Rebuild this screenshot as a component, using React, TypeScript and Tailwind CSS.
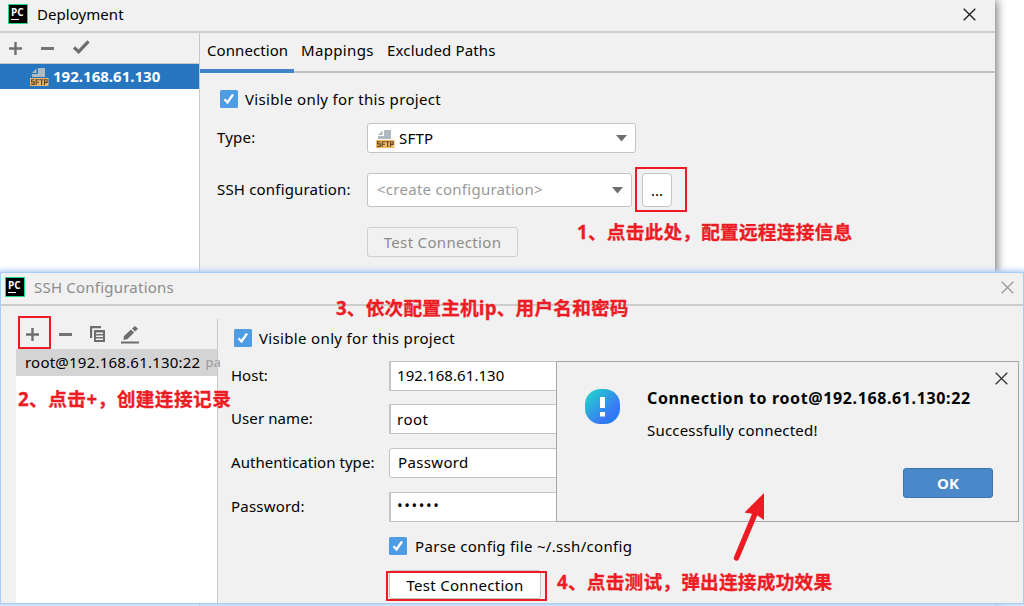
import type { ReactNode } from "react";

const ui = "font-['Noto_Sans','Noto_Sans_CJK_SC',sans-serif]";

function PyCharmIcon() {
  return (
    <div className="flex h-5 w-5 shrink-0 flex-col border border-[#21d789] bg-black pt-[2px] pl-[2px]">
      <span className="h-[10px] font-['Open_Sans',sans-serif] text-[10px] leading-[10px] font-bold text-white">PC</span>
      <span className="mt-[2px] h-px w-2 bg-white" />
    </div>
  );
}

function SftpIcon({ selected = false }: { selected?: boolean }) {
  return (
    <svg width="19" height="19" viewBox="0 0 19 19" className="shrink-0">
      <path d="M8 1h7v9H2V7h6z" fill="#aeb9c0" />
      <path d="M6.500 1.500v4.500H2z" fill="#aeb9c0" />
      <rect x="0" y="11" width="18.500" height="8" fill={selected ? "#e9b66e" : "#f4bb68"} />
      <g fill="none" stroke="#5c4526" strokeWidth="1.150">
        <path d="M4.500 12.700H1.600v2.200h2.600v2.500H1" />
        <path d="M6.200 18v-5.300H9.400M6.200 15.200H9" />
        <path d="M9.800 12.700h3.600M11.600 12.700V18" />
        <path d="M14.500 18v-5.300h2.600v2.700h-2.600" />
      </g>
    </svg>
  );
}

function Plus() {
  return (
    <svg width="13" height="13" viewBox="0 0 13 13" className="shrink-0">
      <path d="M6.500 0v13M0 6.500h13" stroke="#6e6e6e" strokeWidth="2.400" />
    </svg>
  );
}

function Minus() {
  return <div className="h-[3px] w-[13px] shrink-0 bg-[#737373]" />;
}

function Close({ color }: { color: string }) {
  return (
    <svg width="13" height="13" viewBox="0 0 13 13" className="shrink-0">
      <path d="M.7.700l11.600 11.600M12.300.700L.7 12.300" stroke={color} strokeWidth="1.300" />
    </svg>
  );
}

function Checkbox() {
  return (
    <svg width="18" height="18" viewBox="0 0 18 18" className="shrink-0">
      <rect width="18" height="18" rx="1.500" fill="#4e9de4" />
      <path d="M4.500 9.300l3 3.200 5.500-8" fill="none" stroke="#fff" strokeWidth="2.300" />
    </svg>
  );
}

function Caret() {
  return (
    <svg width="11" height="7" viewBox="0 0 11 7" className="shrink-0">
      <path d="M0 0h11L5.500 6.500z" fill="#6e6e6e" />
    </svg>
  );
}

function Note({ className, children }: { className: string; children: ReactNode }) {
  return (
    <div
      className={`absolute font-['Open_Sans','Noto_Sans_CJK_SC',sans-serif] text-[18.700px] leading-6 font-bold whitespace-nowrap text-[#ed1c24] [-webkit-text-stroke:0.3px_#ed1c24] ${className}`}
    >
      {children}
    </div>
  );
}

function DeploymentWindow() {
  return (
    <section className="absolute top-0 left-0 flex h-[606px] w-[995px] flex-col bg-[#f1f1f1] shadow-[2px_0_9px_rgba(0,0,0,0.55)]">
      <header className="flex h-[33px] items-center border-b-2 border-[#cdcdcd] pr-[19px] pb-[3px] pl-2">
        <PyCharmIcon />
        <span className="ml-[9px] tracking-[0.050px]">Deployment</span>
        <span className="ml-auto">
          <Close color="#1a1a1a" />
        </span>
      </header>
      <div className="flex flex-1">
        <aside className="flex w-[200px] flex-col border-r border-[#c9c9c9] bg-white">
          <div className="flex h-[31px] items-center border-b border-[#c9c9c9] bg-[#f1f1f1] pl-[9px]">
            <Plus />
            <span className="ml-[19px]">
              <Minus />
            </span>
            <svg width="17" height="14" viewBox="0 0 17 14" className="mb-[2px] ml-[19px]">
              <path d="M1 7.500l4.700 4.200L15.500 1.300" fill="none" stroke="#6e6e6e" strokeWidth="3.200" />
            </svg>
          </div>
          <div className="flex h-[25px] items-center bg-[#2675bf] pl-[30px] font-bold text-white">
            <SftpIcon selected />
            <span className="mb-[2px] ml-1 tracking-[0.020px]">192.168.61.130</span>
          </div>
        </aside>
        <main className="flex flex-1 flex-col">
          <nav className="flex h-[40px] border-b-2 border-[#c1c3c2]">
            <span className="-mb-[2px] flex w-[94px] border-b-4 border-[#4083c9] pt-[6px] pl-[7px] tracking-[0.080px]">Connection</span>
            <span className="w-[86px] pt-[6px] pl-[7px] tracking-[0.350px]">Mappings</span>
            <span className="pt-[6px] pl-[7px] tracking-[0.150px]">Excluded Paths</span>
          </nav>
          <div className="flex flex-col pl-[17px]">
            <div className="mt-[17px] flex h-[18px] items-center pl-[3px]">
              <Checkbox />
              <span className="ml-[7px] tracking-[0.340px]">Visible only for this project</span>
            </div>
            <div className="mt-[15px] flex h-[30px] items-center">
              <span className="w-[150px] pb-[2px] tracking-[0.200px]">Type:</span>
              <div className="flex h-[30px] w-[269px] items-center rounded-[3px] border border-[#c4c4c4] bg-white pr-2 pl-2">
                <SftpIcon />
                <span className="ml-[4px] tracking-[0.200px]">SFTP</span>
                <span className="ml-auto">
                  <Caret />
                </span>
              </div>
            </div>
            <div className="mt-[20px] flex h-[34px] items-center">
              <span className="w-[150px] pb-[2px] tracking-[0.180px]">SSH configuration:</span>
              <div className="flex h-[34px] w-[265px] items-center rounded-[3px] border border-[#c4c4c4] bg-white pr-2 pl-[9px] text-[#999]">
                <span className="pb-[2px] tracking-[0.270px]">&lt;create configuration&gt;</span>
                <span className="ml-auto">
                  <Caret />
                </span>
              </div>
              <button className="ml-[10px] h-[34px] w-[30px] rounded-[4px] border border-[#c4c4c4] bg-white">...</button>
            </div>
            <button className="mt-[20px] ml-[150px] h-[30px] w-[151px] rounded-[3px] border border-[#cfcfcf] tracking-[0.330px] text-[#8c8c8c]">
              Test Connection
            </button>
          </div>
        </main>
      </div>
    </section>
  );
}

interface FieldProps {
  label: string;
  labelClass?: string;
  square?: boolean;
  className?: string;
  children: ReactNode;
}

function Field({ label, labelClass = "", square = true, className = "", children }: FieldProps) {
  return (
    <div className={`flex h-[30px] items-center ${className}`}>
      <span className={`w-[158px] pb-[2px] ${labelClass}`}>{label}</span>
      <div
        className={`mr-[12px] flex h-[30px] flex-1 items-center border border-[#c4c4c4] bg-white ${square ? "border-l-2 pl-[6px]" : "rounded-[3px] pl-2"}`}
      >
        {children}
      </div>
    </div>
  );
}

function SshWindow() {
  return (
    <section className="absolute top-[273px] left-px flex h-[330px] w-[1022px] flex-col bg-[#f1f1f1] shadow-[0_0_0_1px_#a9cdf7,0_0_5px_3px_#b2d2f7]">
      <header className="flex h-[33px] items-center border-b-2 border-[#cdcdcd] pr-[9px] pb-[3px] pl-1 text-[#8c8c8c]">
        <PyCharmIcon />
        <span className="ml-[9px] tracking-[0.220px]">SSH Configurations</span>
        <span className="ml-auto">
          <Close color="#999999" />
        </span>
      </header>
      <div className="flex flex-1">
        <aside className="ml-[15px] flex w-[201px] flex-col bg-white">
          <div className="flex h-[43px] items-center bg-[#f1f1f1] pt-[14px] pl-[10px]">
            <Plus />
            <span className="ml-[20px]">
              <Minus />
            </span>
            <svg width="16" height="17" viewBox="0 0 16 17" className="ml-[18px]">
              <path d="M0 0h11v2.200H2.200V12H0z" fill="#6e6e6e" />
              <path fillRule="evenodd" d="M4 4h11v12H4zM6 6.500h7V8H6zM6 9.500h7V11H6zM6 12.500h7V14H6z" fill="#6e6e6e" />
            </svg>
            <svg width="18" height="18" viewBox="0 0 18 18" className="ml-[15px]">
              <path d="M2.800 10.300L10 3.400l3.200 3L6.500 13l-4 1zM11 2.500L14 0l3 2.700-2.800 2.800z" fill="#6e6e6e" />
              <path d="M0 16.500h18" stroke="#6e6e6e" strokeWidth="2" />
            </svg>
          </div>
          <div className="flex h-[27px] items-center bg-[#d4d4d4] pb-[2px] pl-[9px]">
            <span className="tracking-[0.220px]">root@192.168.61.130:22</span>
            <span className="ml-[5px] text-[13px] text-[#999]">pa</span>
          </div>
        </aside>
        <main className="mt-[13px] flex flex-1 flex-col border-l border-[#c9c9c9] pl-[13px]">
          <div className="mt-[10px] flex h-[18px] items-center pl-[3px]">
            <Checkbox />
            <span className="ml-[7px] tracking-[0.340px]">Visible only for this project</span>
          </div>
          <Field label="Host:" className="mt-[14px]">
            <span className="pb-[2px] tracking-[0.070px]">192.168.61.130</span>
          </Field>
          <Field label="User name:" labelClass="tracking-[0.100px]" className="mt-[13px]">
            <span className="pb-px tracking-[0.500px]">root</span>
          </Field>
          <Field label="Authentication type:" labelClass="tracking-[0.050px]" square={false} className="mt-[14px]">
            <span className="pb-[2px] tracking-[0.350px]">Password</span>
          </Field>
          <Field label="Password:" labelClass="tracking-[0.200px]" className="mt-[14px]">
            <span className="pb-[5px] tracking-[1.600px]">••••••</span>
          </Field>
          <div className="mt-[15px] flex h-[18px] items-center pl-[158px]">
            <Checkbox />
            <span className="ml-[8px] tracking-[0.320px]">Parse config file ~/.ssh/config</span>
          </div>
          <button className="mt-[15px] ml-[158px] h-[29px] w-[152px] rounded-[3px] border border-[#c4c4c4] bg-white tracking-[0.300px]">
            Test Connection
          </button>
        </main>
      </div>
    </section>
  );
}

function SuccessDialog() {
  return (
    <section className="absolute top-[361px] left-[556px] flex h-[161px] w-[463px] border border-[#a5a5a5] bg-[#f1f1f1] pt-[27px] pl-[28px]">
      <svg width="35" height="35" viewBox="0 0 35 35">
        <defs>
          <linearGradient id="info" x1="0" y1="0" x2="1" y2="1">
            <stop offset="0.100" stopColor="#21d0cc" />
            <stop offset="0.700" stopColor="#3a78f5" />
            <stop offset="1" stopColor="#0b84ee" />
          </linearGradient>
        </defs>
        <rect width="35" height="35" rx="15.500" fill="url(#info)" />
        <path d="M15 8h5v11h-5zM15 23h5v4.500h-5z" fill="#fff" />
      </svg>
      <div className="flex flex-1 flex-col pl-[27px]">
        <div className="flex">
          <h2 className="-mt-[2px] text-[16px] leading-[22px] font-bold tracking-[0.620px]">Connection to root@192.168.61.130:22</h2>
          <span className="-mt-[17px] mr-[10px] ml-auto">
            <Close color="#333333" />
          </span>
        </div>
        <p className="mt-[10px] tracking-[0.200px]">Successfully connected!</p>
        <button className="mt-auto mr-[25px] mb-[23px] h-[30px] w-[90px] self-end rounded-[3px] border border-[#3d75b1] bg-[#4a88c9] font-bold text-white">OK</button>
      </div>
    </section>
  );
}

export default function App() {
  return (
    <div className={`relative h-[606px] w-[1024px] overflow-hidden bg-white text-[15px] leading-[22px] whitespace-nowrap text-black ${ui}`}>
      <DeploymentWindow />
      <SshWindow />
      <SuccessDialog />
      <div className="absolute top-[167px] left-[635px] h-[45px] w-[52px] border-2 border-[#ed1c24]" />
      <div className="absolute top-[316px] left-[18px] h-[33px] w-[33px] border-2 border-[#ed1c24]" />
      <div className="absolute top-[571px] left-[386px] h-[30px] w-[161px] border-2 border-[#ed1c24]" />
      <Note className="top-[220px] left-[577px] tracking-[0.200px]">1、点击此处，配置远程连接信息</Note>
      <Note className="top-[387px] left-[18px] tracking-[0.420px]">2、点击+，创建连接记录</Note>
      <Note className="top-[296px] left-[336px] tracking-[0.170px]">3、依次配置主机ip、用户名和密码</Note>
      <Note className="top-[570px] left-[557px] tracking-[0.200px]">4、点击测试，弹出连接成功效果</Note>
      <svg className="absolute top-[490px] left-[730px]" width="40" height="74" viewBox="0 0 40 74">
        <path d="M6.500 68L27 19" stroke="#ed1c24" strokeWidth="5.500" strokeLinecap="round" />
        <path d="M34 3v27l-8-5.500-11.500-2z" fill="#ed1c24" />
      </svg>
    </div>
  );
}
